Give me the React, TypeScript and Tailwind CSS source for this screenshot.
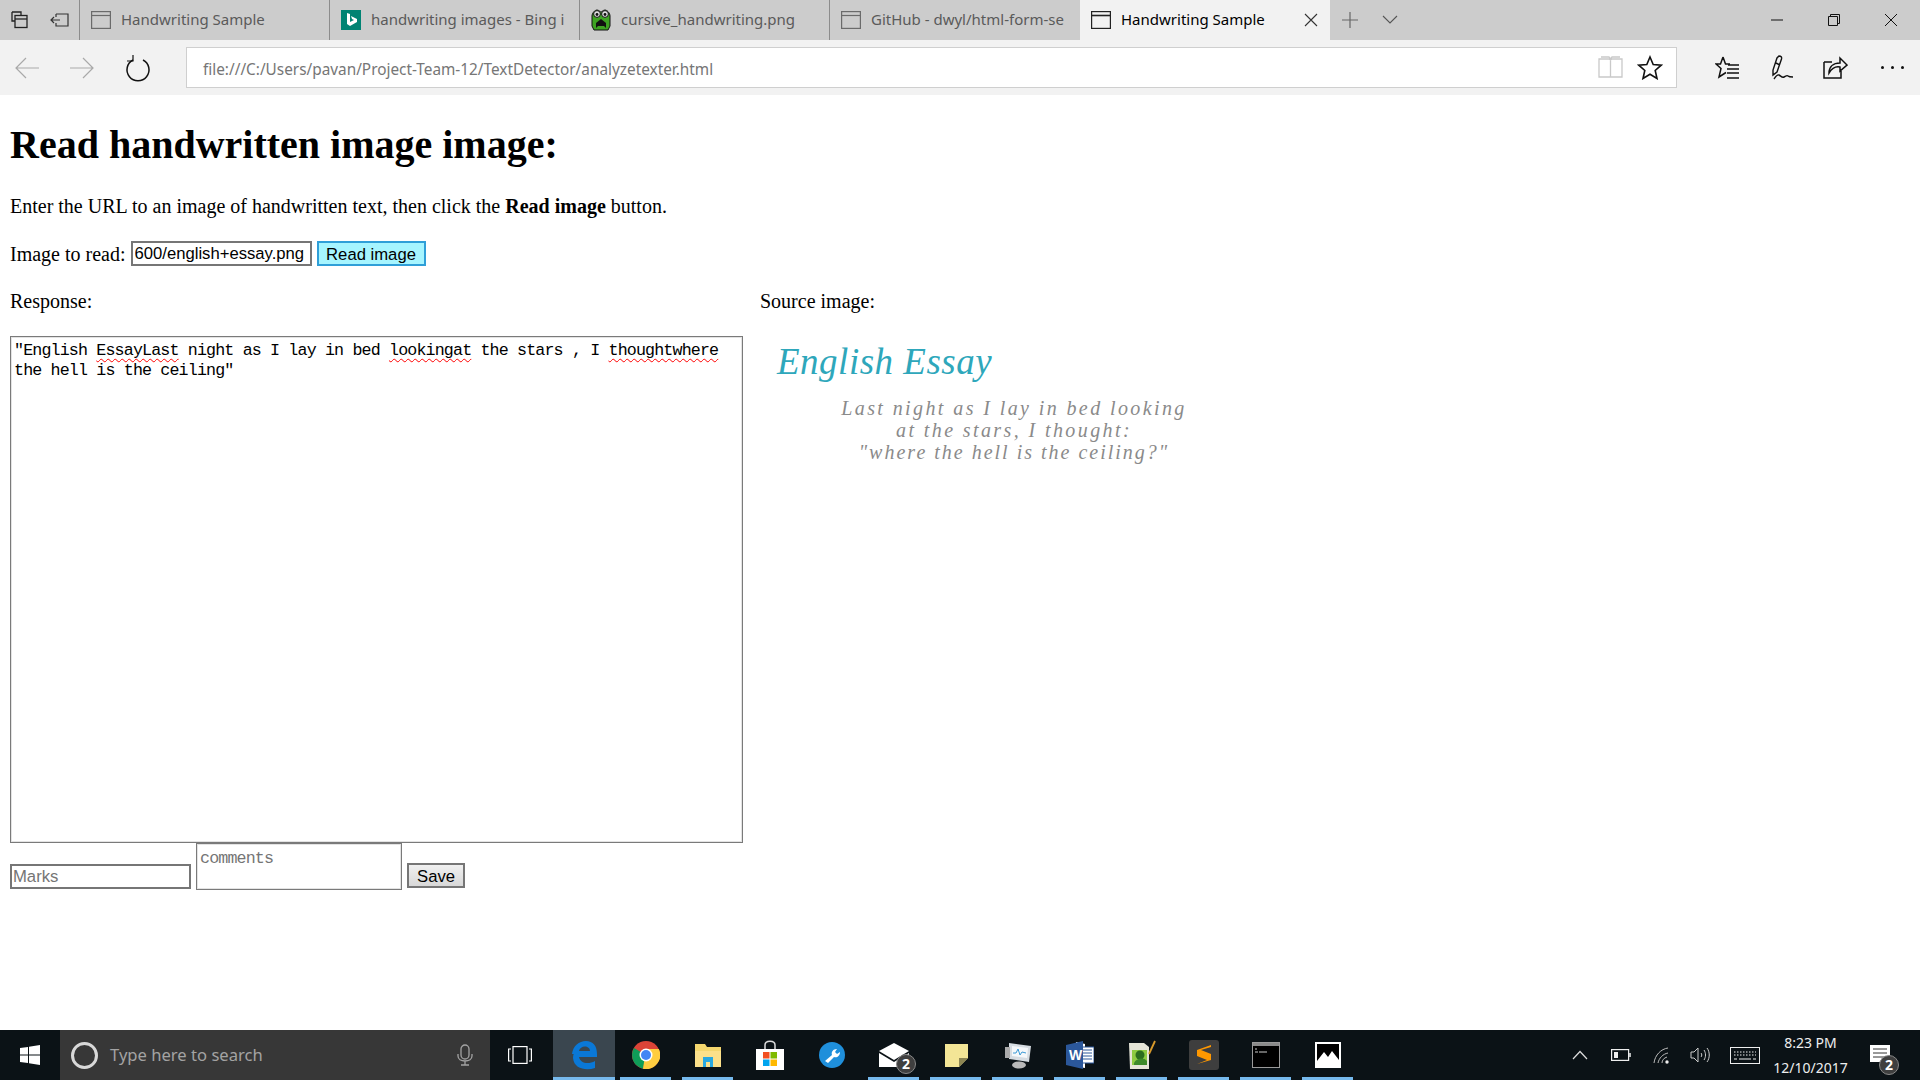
import React from "react";

const uiFont = "font-['Noto_Sans','Open_Sans',sans-serif]";

const PageIcon = ({ dark }: { dark?: boolean }) => (
  <svg width="20" height="20" viewBox="0 0 20 20" fill="none" stroke={dark ? "#222" : "#6b6b6b"} strokeWidth="1.2">
    <rect x="0.6" y="1.6" width="18.8" height="16.8" />
    <path d="M1 5.5h18" strokeWidth={dark ? 1.6 : 1.2} />
  </svg>
);

const BingIcon = () => (
  <svg width="20" height="20" viewBox="0 0 20 20">
    <rect width="20" height="20" fill="#008373" />
    <path d="M6 3l3 1v8l4-2-2-1-1-3 6 3v3l-7 4-3-2z" fill="#fff" />
  </svg>
);

const CreeperIcon = () => (
  <svg width="22" height="24" viewBox="0 0 22 24">
    <path d="M2 8c0-3 3-6 5-6s3 2 4 2 2-2 4-2 5 3 5 6v10l-2 4H4l-2-4z" fill="#3da322" stroke="#111" />
    <circle cx="7" cy="6" r="3.4" fill="#ddd" stroke="#111" />
    <circle cx="15" cy="6" r="3.4" fill="#ddd" stroke="#111" />
    <circle cx="7" cy="6.5" r="1.4" fill="#111" />
    <circle cx="15" cy="6.5" r="1.4" fill="#111" />
    <path d="M6 20v-5l5-4 5 4v5l-2-2h-6z" fill="#111" />
  </svg>
);

const Tab = ({ w, icon, title, sep = true }: { w: string; icon: React.ReactNode; title: string; sep?: boolean }) => (
  <div className={`flex items-center h-full pl-[10px] overflow-hidden ${w} ${sep ? "border-r border-[#8c8c8c]" : ""}`}>
    <span className="w-[22px] flex justify-center shrink-0">{icon}</span>
    <span className="ml-[9px] pb-[2px] text-[15px] text-[#5a5a5a] whitespace-nowrap">{title}</span>
  </div>
);

const TabBar = () => (
  <div className={`flex h-10 bg-[#cccccc] ${uiFont}`}>
    <div className="w-[80px] flex items-center border-r border-[#8c8c8c] pl-[11px] gap-[21px] h-full shrink-0">
      <svg width="18" height="18" viewBox="0 0 18 18" fill="none" stroke="#222" strokeWidth="1.3">
        <path d="M1 1h9v3M1 1v9h3" />
        <rect x="4" y="4.5" width="12" height="12" />
        <path d="M4 8h12" />
      </svg>
      <svg width="20" height="18" viewBox="0 0 20 18" fill="none" stroke="#333" strokeWidth="1.2">
        <path d="M6 3h12v12H6v-3M6 3v3M9 3v0M1 9h9M4 6L1 9l3 3" />
      </svg>
    </div>
    <Tab w="w-[250px]" icon={<PageIcon />} title="Handwriting Sample" />
    <Tab w="w-[250px]" icon={<BingIcon />} title="handwriting images - Bing i" />
    <Tab w="w-[250px]" icon={<CreeperIcon />} title="cursive_handwriting.png" />
    <Tab w="w-[250px]" icon={<PageIcon />} title="GitHub - dwyl/html-form-se" sep={false} />
    <div className="flex items-center w-[250px] h-full bg-[#f2f2f2] pl-[10px] relative">
      <span className="w-[22px] flex justify-center shrink-0"><PageIcon dark /></span>
      <span className="ml-[9px] pb-[2px] text-[15px] text-black whitespace-nowrap">Handwriting Sample</span>
      <svg className="ml-auto mr-[12px]" width="14" height="14" viewBox="0 0 14 14" stroke="#333" strokeWidth="1.1">
        <path d="M1 1l12 12M13 1L1 13" />
      </svg>
    </div>
    <div className="flex items-center pl-[12px] gap-[24px]">
      <svg width="16" height="16" viewBox="0 0 16 16" stroke="#666" strokeWidth="1.2"><path d="M8 0v16M0 8h16" /></svg>
      <svg width="16" height="10" viewBox="0 0 16 10" fill="none" stroke="#555" strokeWidth="1.1"><path d="M1 1l7 7 7-7" /></svg>
    </div>
    <div className="ml-auto flex items-center h-full">
      <div className="w-[57px] flex justify-center">
        <svg width="12" height="2" viewBox="0 0 12 2" stroke="#111"><path d="M0 1h12" /></svg>
      </div>
      <div className="w-[57px] flex justify-center">
        <svg width="12" height="12" viewBox="0 0 12 12" fill="none" stroke="#111"><path d="M2.5 2.5V.5h9v9h-2M.5 2.5h9v9h-9z" /></svg>
      </div>
      <div className="w-[57px] flex justify-center mr-px">
        <svg width="12" height="12" viewBox="0 0 12 12" stroke="#111"><path d="M0 0l12 12M12 0L0 12" /></svg>
      </div>
    </div>
  </div>
);

const Toolbar = () => (
  <div className={`flex items-center h-[55px] bg-[#f2f2f2] ${uiFont}`}>
    <div className="w-[186px] flex items-center pl-[15px] shrink-0">
      <svg width="25" height="22" viewBox="0 0 25 22" fill="none" stroke="#a9a9a9" strokeWidth="1.2"><path d="M24 11H1M11 1L1 11l10 10" /></svg>
      <svg className="ml-[30px]" width="25" height="22" viewBox="0 0 25 22" fill="none" stroke="#a9a9a9" strokeWidth="1.2"><path d="M0 11h23M13 1l10 10-10 10" /></svg>
      <svg className="ml-[30px]" width="26" height="28" viewBox="0 0 26 28" fill="none" stroke="#111" strokeWidth="1.5"><path d="M8 6a11 11 0 1 0 10 0" /><path d="M8 1v6H2" strokeWidth="1.2" /></svg>
    </div>
    <div className="w-[1491px] h-[41px] bg-white border border-[#cfcfcf] flex items-center pl-4 shrink-0">
      <span className="text-[15.35px] text-[#767676] pt-[4px]">file:///C:/Users/pavan/Project-Team-12/TextDetector/analyzetexter.html</span>
      <svg className="ml-auto" width="25" height="23" viewBox="0 0 25 23" fill="none" stroke="#c9c9c9" strokeWidth="1.3">
        <path d="M1 3h10l1.500 1 1.500-1h10v18H1zM12.500 4v17M3 1h8l1.500 2M22 1h-8l-1.500 2" />
      </svg>
      <svg className="ml-[14px] mr-[13px]" width="26" height="25" viewBox="0 0 26 25" fill="none" stroke="#111" strokeWidth="1.6">
        <path d="M13 2l3.200 7.500 8 .7-6 5.300 1.800 8L13 19.300 6 23.500l1.800-8-6-5.300 8-.7z" />
      </svg>
    </div>
    <div className="flex items-center pl-[38px]">
      <svg width="24" height="23" viewBox="0 0 24 23" fill="none" stroke="#111" strokeWidth="1.500">
        <path d="M8 1l2.500 7H15M8 1L5.500 8H1l5 4.500L4 21l7-4.500M13 9h11M12 13h12M12 17h12M12 22h12" />
      </svg>
      <svg className="ml-[32px]" width="24" height="25" viewBox="0 0 24 25" fill="none" stroke="#111" strokeWidth="1.400">
        <path d="M8 1c2 0 3 1 2.500 3L6 17l-4 3V15L6 3zM5 8l4 2M3 24c2-3 3-5 5-4s3 3 5 2 3-2 4-1 2 1 5 1" />
      </svg>
      <svg className="ml-[28px]" width="25" height="25" viewBox="0 0 25 25" fill="none" stroke="#111" strokeWidth="1.500">
        <path d="M1 7h8M1 7v16h17v-7M6 18c0-6 4-10 11-10V3l7 7-7 6v-4c-5-1-8 1-11 6z" />
      </svg>
      <div className="ml-[33px] flex gap-[7px]">
        <span className="size-[3px] bg-[#111] rounded-full" />
        <span className="size-[3px] bg-[#111] rounded-full" />
        <span className="size-[3px] bg-[#111] rounded-full" />
      </div>
    </div>
  </div>
);

const Squiggle = ({ children }: { children: React.ReactNode }) => (
  <span className="underline decoration-wavy decoration-[#ff0000] decoration-1 underline-offset-[3px]">{children}</span>
);

const SourceImage = () => (
  <div className="mt-[25px] h-[110px] font-['Liberation_Serif',serif] italic">
    <p className="ml-[17px] text-[37px] leading-[48px] text-[#2ea7bb] tracking-[0.5px]">English Essay</p>
    <div className="w-[380px] ml-[64px] mt-[11px] text-center text-[#8a8a8a] text-[20px] leading-[22px] tracking-[2.4px]">
      <p className="whitespace-nowrap">Last night as I lay in bed looking</p>
      <p className="whitespace-nowrap">at the stars, I thought:</p>
      <p className="whitespace-nowrap tracking-[2px]">"where the hell is the ceiling?"</p>
    </div>
  </div>
);

const Page = () => (
  <div className="flex-1 bg-white text-black font-['Liberation_Serif',serif] text-[20px] leading-[23px] px-[10px] overflow-hidden">
    <h1 className="mt-[27px] text-[40px] leading-[46px] font-bold">Read handwritten image image:</h1>
    <p className="mt-[27px]">
      Enter the URL to an image of handwritten text, then click the <b>Read image</b> button.
    </p>
    <div className="mt-[24px] flex items-center h-[25px]">
      <span>Image to read:</span>
      <input
        readOnly
        value="600/english+essay.png"
        className="ml-[5px] mb-[2px] w-[181px] h-[25px] border-2 border-[#767676] px-[2px] text-[16.67px] font-['Liberation_Sans',sans-serif] text-black outline-none"
      />
      <button className="ml-[5px] mb-[2px] w-[109px] h-[25px] bg-[#a6f5ff] border-2 border-[#2f9fd8] text-[16.67px] font-['Liberation_Sans',sans-serif] text-black">
        Read image
      </button>
    </div>
    <div className="mt-[23px] flex">
      <div className="w-[733px] shrink-0">
        <p>Response:</p>
        <div className="mt-[23px] h-[507px] border border-[#7a7a7a] shadow-[inset_0_0_0_1px_#e3e3e3] px-[3px] pt-[4px] font-['Liberation_Mono',monospace] text-[16.67px] tracking-[-0.85px] leading-[20px]">
          "English <Squiggle>EssayLast</Squiggle> night as I lay in bed <Squiggle>lookingat</Squiggle> the stars , I <Squiggle>thoughtwhere</Squiggle>
          <br />
          the hell is the ceiling"
        </div>
      </div>
      <div className="ml-[17px]">
        <p>Source image:</p>
        <SourceImage />
      </div>
    </div>
    <div className="flex items-end">
      <input
        readOnly
        placeholder="Marks"
        className="w-[181px] h-[25px] mb-px border-2 border-[#767676] px-[1px] text-[16.67px] font-['Liberation_Sans',sans-serif] placeholder:text-[#757575] outline-none"
      />
      <textarea
        readOnly
        placeholder="comments"
        className="ml-[5px] w-[206px] h-[47px] border border-[#7a7a7a] shadow-[inset_0_0_0_1px_#e3e3e3] px-[3px] pt-[5px] resize-none font-['Liberation_Mono',monospace] text-[16.67px] tracking-[-0.85px] leading-[20px] placeholder:text-[#757575] outline-none"
      />
      <button className="ml-[5px] w-[58px] h-[25px] mb-[2px] border-2 border-[#767676] bg-gradient-to-b from-[#f0f0f0] to-[#d8d8d8] text-[16.67px] font-['Liberation_Sans',sans-serif]">
        Save
      </button>
    </div>
  </div>
);

const TaskSlot = ({ on, active, children }: { on?: boolean; active?: boolean; children: React.ReactNode }) => (
  <div className={`relative w-[62px] h-full flex items-center justify-center shrink-0 ${active ? "bg-[#3a464f]" : ""}`}>
    {children}
    {on && <span className={`absolute bottom-0 h-[3px] bg-[#76b9ed] ${active ? "left-0 right-0" : "left-[5px] w-[51px]"}`} />}
  </div>
);

const Badge = ({ className }: { className: string }) => (
  <span className={`absolute size-[20px] rounded-full bg-[#3f3f3f] border border-[#888] text-white text-[14px] leading-[18px] text-center font-bold ${className}`}>2</span>
);

const Taskbar = () => (
  <div className={`flex items-center h-[50px] bg-[#0b1216] shrink-0 text-white ${uiFont}`}>
    <div className="w-[60px] h-full flex items-center justify-center shrink-0">
      <svg width="20" height="20" viewBox="0 0 20 20" fill="#fff">
        <path d="M0 3l8-1v7.500H0zM9 1.800L20 0v9.500H9zM0 10.500h8V18l-8-1zM9 10.500h11V20L9 18.200z" />
      </svg>
    </div>
    <div className="w-[430px] h-full bg-[#373737] flex items-center pl-[11px] shrink-0">
      <span className="size-[27px] rounded-full border-[3px] border-[#d8d8d8]" />
      <span className="ml-[12px] text-[16.6px] text-[#a3a3a3]">Type here to search</span>
      <svg className="ml-auto mr-[17px]" width="16" height="22" viewBox="0 0 16 22" fill="none" stroke="#a3a3a3" strokeWidth="1.300">
        <rect x="4" y="1" width="8" height="14" rx="4" />
        <path d="M1 10v2c0 3 3 5 7 5s7-2 7-5v-2M8 17v4M4 21h8" />
      </svg>
    </div>
    <div className="w-[63px] h-full flex items-center justify-center shrink-0 pr-[3px]">
      <svg width="24" height="18" viewBox="0 0 24 18" fill="none" stroke="#fff" strokeWidth="1.200">
        <rect x="5" y="0.600" width="14" height="16.800" />
        <path d="M3 3H.6v12H3M21 3h2.400v12H21" />
      </svg>
    </div>
    <TaskSlot on active>
      <svg width="28" height="30" viewBox="0 0 28 30">
        <path d="M2 14C3 6 9 1 16 1c7 0 11 5 11 13v3H9c1 6 9 8 16 4v7c-9 3-21 1-22-10 0-3 1-6 3-8-1 2-2 3-2 4zM9 11h11c0-6-10-6-11 0z" fill="#0a78d7" />
      </svg>
    </TaskSlot>
    <TaskSlot on>
      <svg width="28" height="28" viewBox="0 0 28 28">
        <circle cx="14" cy="14" r="14" fill="#db4437" />
        <path d="M14 14L2 7a14 14 0 0 0 9 20.700z" fill="#0f9d58" />
        <path d="M14 8h12.800A14 14 0 0 1 11 27.700z" fill="#ffcd40" />
        <circle cx="14" cy="14" r="6.500" fill="#fff" />
        <circle cx="14" cy="14" r="5" fill="#4285f4" />
      </svg>
    </TaskSlot>
    <TaskSlot on>
      <svg width="26" height="24" viewBox="0 0 26 24">
        <path d="M0 1h10l2 3h14v20H0z" fill="#f5d76e" />
        <rect x="0" y="8" width="26" height="16" fill="#fce08a" />
        <path d="M8 14h10v10h-3v-5h-4v5H8z" fill="#29a8e0" />
      </svg>
    </TaskSlot>
    <TaskSlot>
      <svg width="30" height="30" viewBox="0 0 30 30">
        <path d="M1 9h28v21H1z" fill="#fff" />
        <path d="M10 9V5c0-5 10-5 10 0v4" fill="none" stroke="#ddd" strokeWidth="1.500" />
        <rect x="8" y="12" width="6.500" height="6.500" fill="#f25022" />
        <rect x="15.500" y="12" width="6.500" height="6.500" fill="#7fba00" />
        <rect x="8" y="19.500" width="6.500" height="6.500" fill="#00a4ef" />
        <rect x="15.500" y="19.500" width="6.500" height="6.500" fill="#ffb900" />
      </svg>
    </TaskSlot>
    <TaskSlot>
      <svg width="26" height="26" viewBox="0 0 26 26">
        <circle cx="13" cy="13" r="13" fill="#1f8fdb" />
        <path d="M6 19l7-6c-1-3 1-6 5-6l-2 3 2 2 3-2c0 4-3 6-6 5l-6 6z" fill="#fff" />
      </svg>
    </TaskSlot>
    <TaskSlot on>
      <svg width="30" height="24" viewBox="0 0 30 24">
        <path d="M0 8L15 0l15 8-15 9z" fill="#fff" />
        <path d="M0 10l15 9 15-9v14H0z" fill="#fff" />
      </svg>
      <Badge className="left-[33px] top-[24px]" />
    </TaskSlot>
    <TaskSlot on>
      <svg width="23" height="23" viewBox="0 0 23 23">
        <path d="M0 0h23v14l-9 9H0z" fill="#f3e596" />
        <path d="M23 14l-9 9v-9z" fill="#8d8653" />
      </svg>
    </TaskSlot>
    <TaskSlot on>
      <svg width="28" height="28" viewBox="0 0 28 28">
        <path d="M5 2l22 3-2 16-20-3z" fill="#d6dce2" />
        <path d="M8 5l16 2-1 10-15-2z" fill="#f4f7fa" />
        <path d="M9 12l3 0 2-4 2 6 2-3 4 1" fill="none" stroke="#3c9ad6" strokeWidth="1" />
        <ellipse cx="15" cy="24" rx="7" ry="3.500" fill="#b9b9b9" />
        <rect x="1" y="6" width="5" height="11" fill="#aaa" />
      </svg>
    </TaskSlot>
    <TaskSlot on>
      <svg width="28" height="28" viewBox="0 0 28 28">
        <path d="M10 1l9 2v24l-11-2z" fill="#fff" />
        <path d="M16 6h12v16H16z" fill="#fff" stroke="#2b579a" />
        <path d="M17 9h9M17 12h9M17 15h9M17 18h9" stroke="#2b579a" />
        <path d="M0 4l17-4v28L0 24z" fill="#2b579a" />
        <text x="3" y="19" fill="#fff" fontSize="14" fontWeight="700" fontFamily="Liberation Sans">W</text>
      </svg>
    </TaskSlot>
    <TaskSlot on>
      <svg width="28" height="30" viewBox="0 0 28 30">
        <path d="M1 3h15l5 4v22H2z" fill="#e5e5d8" />
        <path d="M4 10h15v15H4z" fill="#8dcb41" />
        <circle cx="12" cy="15" r="4.500" fill="#2c6e1f" />
        <path d="M6 23c2-5 10-6 13-2v4H6z" fill="#3d8a2a" />
        <path d="M21 14L27 1" stroke="#d99a2b" strokeWidth="1.800" />
      </svg>
    </TaskSlot>
    <TaskSlot on>
      <svg width="30" height="30" viewBox="0 0 30 30">
        <rect width="30" height="30" rx="3" fill="#3e3e3e" />
        <path d="M22 5L8 10v6l10 4-10 4 14-4v-6l-10-4 10-3z" fill="#ff9800" />
      </svg>
    </TaskSlot>
    <TaskSlot on>
      <svg width="28" height="26" viewBox="0 0 28 26">
        <rect x="0.500" y="0.500" width="27" height="25" fill="#000" stroke="#9a9a9a" />
        <rect x="1" y="1" width="26" height="3" fill="#8a8a8a" />
        <path d="M3 7h2M3 10h3M7 10h8" stroke="#ccc" />
      </svg>
    </TaskSlot>
    <TaskSlot on>
      <svg width="26" height="26" viewBox="0 0 26 26">
        <rect width="26" height="26" fill="#fff" />
        <rect x="2" y="2" width="22" height="20" fill="#000" />
        <path d="M2 19l7-9 4 5 4-6 7 9v4H2z" fill="#fff" />
      </svg>
    </TaskSlot>
    <div className="ml-auto flex items-center h-full">
      <svg width="16" height="10" viewBox="0 0 16 10" fill="none" stroke="#ddd" strokeWidth="1.200"><path d="M1 9l7-7.500L15 9" /></svg>
      <svg className="ml-[23px]" width="20" height="12" viewBox="0 0 20 12" fill="none" stroke="#eee" strokeWidth="1.200">
        <rect x="0.600" y="0.600" width="17" height="10.800" />
        <rect x="3" y="3" width="4" height="6" fill="#eee" stroke="none" />
        <path d="M19 4v4" strokeWidth="1.500" />
      </svg>
      <svg className="ml-[22px]" width="17" height="17" viewBox="0 0 17 17" fill="none" stroke="#bbb" strokeWidth="1">
        <path d="M1 16C2 8 8 2 15 1M5 16c1-5 5-9 10-10M9 16c0-3 2-5 5-6" />
        <circle cx="14" cy="15" r="1.700" fill="#eee" stroke="none" />
      </svg>
      <svg className="ml-[20px]" width="21" height="16" viewBox="0 0 21 16" fill="none" stroke="#ccc" strokeWidth="1">
        <path d="M1 5h3l4-4v14l-4-4H1zM11 6c1 1 1 3 0 4M14 3c2 3 2 7 0 10M17 1c3 4 3 10 0 14" />
      </svg>
      <svg className="ml-[19px]" width="30" height="17" viewBox="0 0 30 17" fill="none" stroke="#eee" strokeWidth="1">
        <rect x="0.500" y="0.500" width="29" height="16" />
        <path d="M4 5h22M4 8h22" strokeDasharray="1.500 1.500" />
        <path d="M4 12h3M9 12h12M23 12h3" />
      </svg>
      <div className="ml-[13px] w-[75px] text-center text-[14px] leading-[25px] text-[#eeeeee] whitespace-nowrap">
        <p>8:23 PM</p>
        <p>12/10/2017</p>
      </div>
      <div className="relative ml-[22px] mr-[30px] h-full flex items-center">
        <svg width="20" height="20" viewBox="0 0 20 20">
          <path d="M0 0h20v17H0z" fill="#fff" />
          <path d="M3 4h14M3 8h14M3 12h14" stroke="#333" />
        </svg>
        <Badge className="left-[9px] top-[25px]" />
      </div>
    </div>
  </div>
);

export default function App() {
  return (
    <div className="w-[1920px] h-[1080px] flex flex-col overflow-hidden">
      <TabBar />
      <Toolbar />
      <Page />
      <Taskbar />
    </div>
  );
}
